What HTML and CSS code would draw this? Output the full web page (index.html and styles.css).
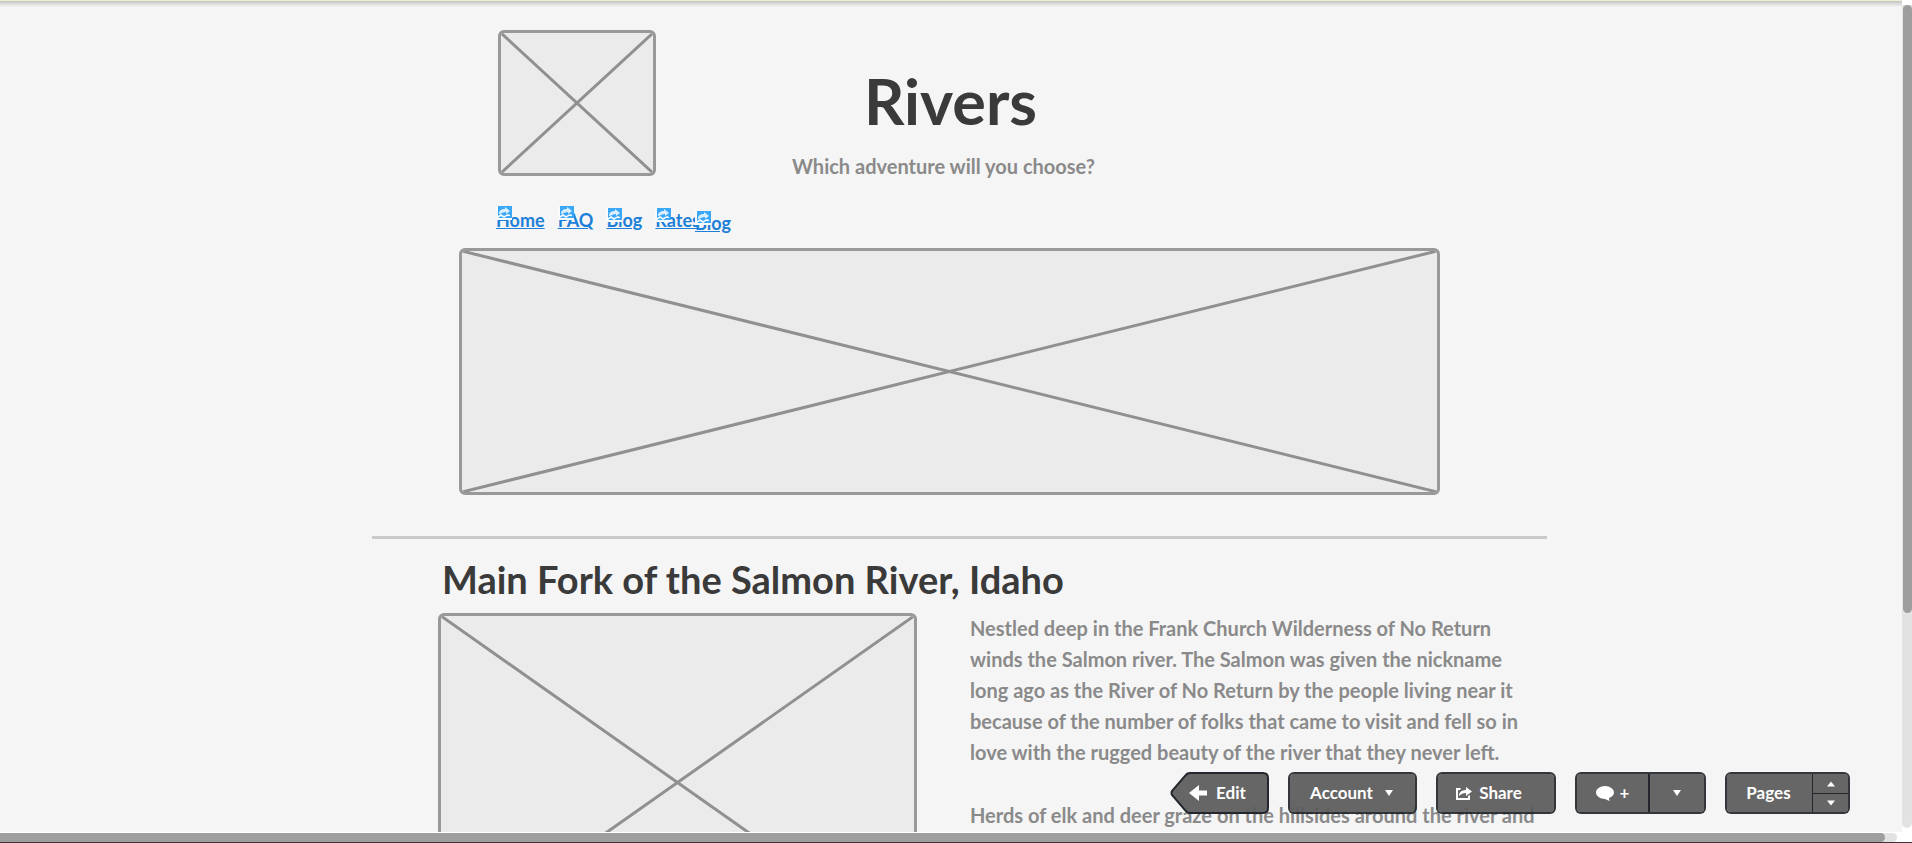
FILE: index.html
```html
<!DOCTYPE html>
<html lang="en">
<head>
<meta charset="utf-8">
<title>Rivers</title>
<link rel="stylesheet" href="styles.css">
</head>
<body>
<svg class="defs" aria-hidden="true">
  <symbol id="broken" viewBox="0 0 16 16">
    <path d="M0 0h16v14H0z" fill="#f8fbfe"/>
    <path d="M2 0H16V12H2Z" fill="#3ba7f7"/>
    <path d="M3 8C3 4 6 3 9 3V1L14 5L10 8V6C7 6 6 7 4 8Z" fill="#d9efff"/>
    <path d="M2 10L5 8L8 10L12 8L14 9V10L11 10L8 12L5 10L2 12Z" fill="#f8fbfe"/>
  </symbol>
</svg>
<div class="window">
  <div class="viewport">
    <main class="page">
      <header class="masthead">
        <svg class="placeholder logo" viewBox="0 0 100 100" preserveAspectRatio="none" role="img" aria-label="Logo"><path d="M0 0L100 100M100 0L0 100"/></svg>
        <div class="titles">
          <h1>Rivers</h1>
          <p class="tagline">Which adventure will you choose?</p>
        </div>
      </header>
      <nav class="links">
        <a class="link" href="#home">Home<svg><use href="#broken"/></svg></a>
        <a class="link" href="#faq">FAQ<svg><use href="#broken"/></svg></a>
        <a class="link" href="#blog">Blog<svg><use href="#broken"/></svg></a>
        <a class="link" href="#rates">Rates<svg><use href="#broken"/></svg></a>
        <a class="link overlap" href="#blog2">Blog<svg><use href="#broken"/></svg></a>
      </nav>
      <svg class="placeholder hero" viewBox="0 0 100 100" preserveAspectRatio="none" role="img" aria-label="Banner"><path d="M0 0L100 100M100 0L0 100"/></svg>
      <hr class="rule">
      <section class="trip">
        <h2>Main Fork of the Salmon River, Idaho</h2>
        <div class="columns">
          <svg class="placeholder photo" viewBox="0 0 100 100" preserveAspectRatio="none" role="img" aria-label="Photo"><path d="M0 0L100 100M100 0L0 100"/></svg>
          <div class="copy">
            <p>Nestled deep in the Frank Church Wilderness of No Return<br>winds the Salmon river. The Salmon was given the nickname<br>long ago as the River of No Return by the people living near it<br>because of the number of folks that came to visit and fell so in<br>love with the rugged beauty of the river that they never left.</p>
            <p>Herds of elk and deer graze on the hillsides around the river and</p>
          </div>
        </div>
      </section>
    </main>
  </div>
  <div class="vbar"><div class="vthumb"></div></div>
  <div class="hbar"><div class="hthumb"></div></div>
  <div class="toolbar">
    <button class="edit" type="button">
      <svg class="shape" viewBox="0 0 99 42" preserveAspectRatio="none"><path d="M20 1H93Q98 1 98 6V36Q98 41 93 41H20Q17 41 15 38L2 23Q1 21 2 19L15 4Q17 1 20 1Z"/></svg>
      <svg class="arrow" viewBox="0 0 18 16"><path d="M0 8L10 0V5.500H18V10.500H10V16Z"/></svg>
      <span>Edit</span>
    </button>
    <button class="btn account" type="button">Account <svg class="caret" viewBox="0 0 8 6"><path d="M0 0H8L4 6Z"/></svg></button>
    <button class="btn share" type="button"><svg class="shareicon" viewBox="0 0 16 13"><path d="M5 1H0V13H14V8L12 9V11H2V3H4Z"/><path d="M3 9C3 5 6 3 10 3V0L16 4.500L10 9V6C7 6 5 7 3 9Z"/></svg>Share</button>
    <div class="group comments">
      <button class="main" type="button" aria-label="Add comment"><svg class="bubble" viewBox="0 0 18 15"><path d="M9 0C14 0 18 3 18 6.500C18 9 16 11 13 12L13.500 15L9 13C4 13 0 10 0 6.500C0 3 4 0 9 0Z"/></svg><span>+</span></button>
      <button class="more" type="button" aria-label="Comment options"><svg class="caret" viewBox="0 0 8 6"><path d="M0 0H8L4 6Z"/></svg></button>
    </div>
    <div class="group pages">
      <button class="main" type="button">Pages</button>
      <div class="stepper">
        <button type="button" aria-label="Previous page"><svg class="caret" viewBox="0 0 8 5"><path d="M0 5H8L4 0Z"/></svg></button>
        <button type="button" aria-label="Next page"><svg class="caret" viewBox="0 0 8 5"><path d="M0 0H8L4 5Z"/></svg></button>
      </div>
    </div>
  </div>
</div>
</body>
</html>
```
FILE: styles.css
```css
* { box-sizing: border-box; }
body { margin: 0; font-family: Lato, sans-serif; background: #fff; color: #8a8a8a; }
h1, h2, p { margin: 0; }
.defs { position: absolute; width: 0; height: 0; }

.window {
  position: relative;
  display: grid;
  grid-template-columns: 1fr 10px;
  grid-template-rows: minmax(0, 1fr) 11px;
  height: 100vh;
  overflow: hidden;
}
.viewport {
  overflow: hidden;
  background: linear-gradient(#f2ecd0 1px, #c3c5c4 1px, #dcdcdc 4px, #f5f5f5 7px);
}
.page { padding: 30px 355px 0 372px; }

.placeholder {
  display: block;
  background: #ebebeb;
  border: 3px solid #999;
  border-radius: 6px;
}
.placeholder path { fill: none; stroke: #909090; stroke-width: 3px; vector-effect: non-scaling-stroke; }

.masthead { display: flex; gap: 136px; padding-left: 126px; }
.logo { width: 158px; height: 146px; }
.titles { padding-top: 35px; text-align: center; }
h1 { font-size: 63px; line-height: 72px; color: #3a3a3a; padding-left: 14px; }
.tagline { font-size: 20px; line-height: 31px; font-weight: 700; padding-top: 14px; }

.links { display: flex; gap: 13px; padding: 26px 0 0 124px; height: 66px; }
.link {
  position: relative;
  font-size: 18px;
  line-height: 24px;
  font-weight: 700;
  color: #1d80d8;
}
.link svg { position: absolute; left: 0; top: 0; width: 16px; height: 16px; }
.link:first-child svg, .link:nth-child(2) svg { top: -2px; }
.overlap { margin: 3px 0 0 -18px; }

.hero { width: calc(100% - 194px); margin-left: 87px; height: 247px; }
.rule { margin: 41px 0 0; border: 0; height: 3px; background: #cacaca; }

.trip { padding: 18px 0 0 66px; }
h2 { font-size: 38px; line-height: 44px; color: #3a3a3a; padding-left: 4px; white-space: nowrap; }
.columns { display: grid; grid-template-columns: 479fr 577fr; gap: 53px; padding-top: 12px; }
.photo { width: 100%; height: 339px; }
.copy { font-size: 20px; line-height: 31px; font-weight: 700; white-space: nowrap; }
.copy p + p { padding-top: 32px; }

.vbar {
  height: 828px;
  max-height: calc(100vh - 15px);
  padding: 5px 0 0 1px;
  border-radius: 5px;
  background: linear-gradient(#fff 5px, #e2e2e2 5px);
}
.vthumb { height: 608px; border-radius: 5px; background: #9e9e9e; }
.hbar { grid-column: 1 / 3; padding: 1px 15px 0 0; border-bottom: 1px solid #3a3336; background: #fff; }
.hthumb { height: 9px; margin-right: 12px; border-radius: 0 5px 5px 0; background: #9e9e9e; box-shadow: 12px 0 #e2e2e2; }

.toolbar {
  position: absolute;
  right: 62px;
  bottom: 29px;
  display: flex;
  gap: 19px;
  height: 42px;
}
button {
  font: 700 17px/24px Lato, sans-serif;
  color: #fff;
  border: 0;
  padding: 0;
  background: none;
  display: flex;
  align-items: center;
  justify-content: center;
}
button svg { fill: #fff; }
.btn, .group {
  border: 2px solid rgba(30, 34, 40, .9);
  border-radius: 6px;
  background: rgba(90, 90, 90, .93);
  background-clip: padding-box;
}
.edit { position: relative; width: 99px; gap: 9px; padding-right: 4px; }
.shape { position: absolute; inset: 0; width: 100%; height: 100%; }
.edit .shape path { fill: rgba(90, 90, 90, .93); stroke: #23272d; stroke-width: 2px; }
.arrow { position: relative; width: 18px; height: 16px; }
.edit span { position: relative; }
.caret { width: 8px; height: 6px; }
.account { width: 129px; gap: 12px; padding-right: 2px; }
.share { width: 120px; gap: 7px; padding-right: 14px; }
.shareicon { width: 16px; height: 13px; }
.group { display: flex; }
.comments { width: 131px; }
.comments .main { width: 71px; gap: 6px; }
.comments .more { flex: 1; border-left: 2px solid #23272d; }
.bubble { width: 18px; height: 15px; }
.pages { width: 125px; }
.pages .main { flex: 1; padding-right: 2px; }
.stepper { display: grid; grid-template-rows: 1fr 1fr; width: 36px; border-left: 1px solid #23272d; }
.stepper button + button { border-top: 1px solid #23272d; }
```
